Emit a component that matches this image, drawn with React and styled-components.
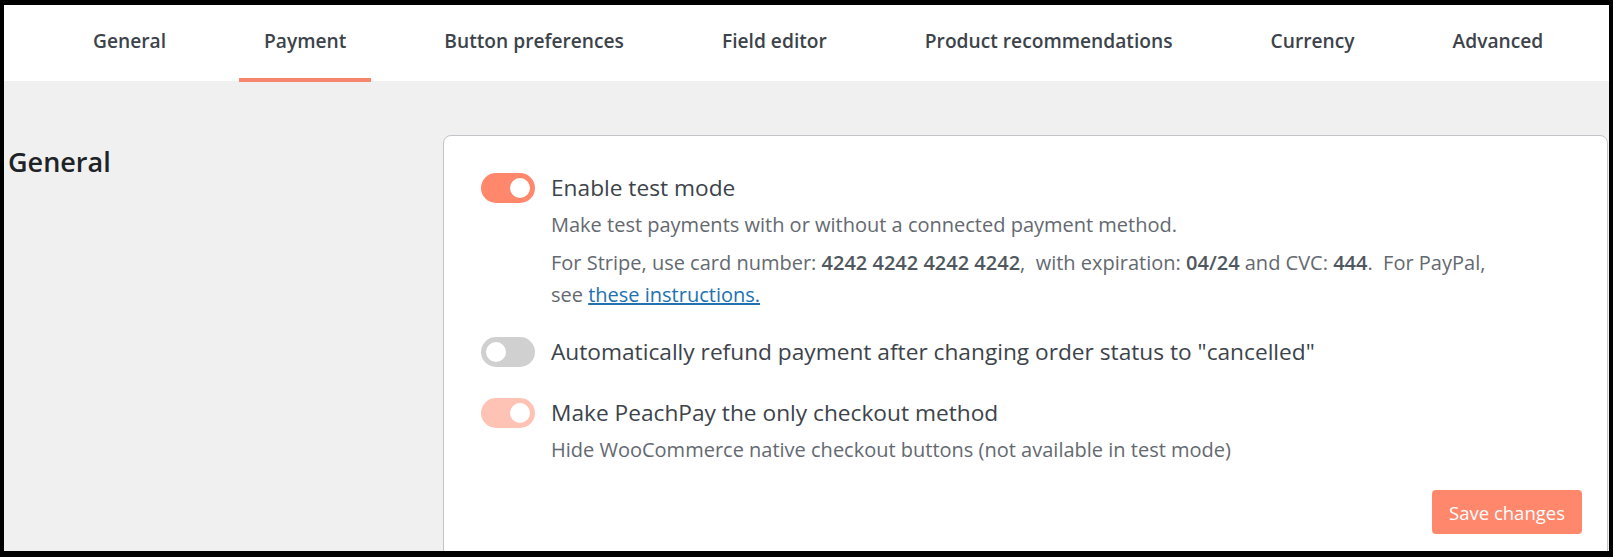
import React from 'react';
import styled, { createGlobalStyle } from 'styled-components';

const GlobalStyle = createGlobalStyle`
  html, body {
    margin: 0;
    padding: 0;
    background: #000;
  }
  * {
    box-sizing: border-box;
  }
`;

const Frame = styled.div`
  height: 100vh;
  border-style: solid;
  border-color: #000;
  border-width: 5px 4px 6px 4px;
  background: #f0f0f1;
  display: flex;
  flex-direction: column;
  overflow: hidden;
  font-family: "Open Sans", "Noto Sans", sans-serif;
`;

const TabBar = styled.nav`
  height: 76px;
  flex-shrink: 0;
  background: #fff;
  display: flex;
  align-items: stretch;
  gap: 48px;
  padding-left: 64px;
`;

const Tab = styled.a`
  display: flex;
  align-items: center;
  padding: 0 25px 3px;
  font-size: 19.2px;
  font-weight: 600;
  color: #3c434a;
  text-decoration: none;
  white-space: nowrap;
  border-bottom: 4px solid ${props => (props.active ? '#f6866d' : 'transparent')};
  margin-bottom: -1px;
`;

const Main = styled.div`
  flex: 1;
  min-height: 0;
  display: grid;
  grid-template-columns: 439px 1fr;
  padding-top: 54px;
  padding-right: 1px;
  overflow: hidden;
`;

const SectionTitle = styled.h2`
  margin: 11px 0 0 4px;
  font-size: 27px;
  font-weight: 600;
  color: #1d2327;
  line-height: 1.2;
`;

const Card = styled.section`
  background: #fff;
  border: 1px solid #c3c4c7;
  border-radius: 8px;
  padding: 34px 25px 60px 37px;
  display: flex;
  flex-direction: column;
  gap: 24px;
  min-height: 460px;
`;

const Setting = styled.div`
  display: grid;
  grid-template-columns: 54px 1fr;
  column-gap: 16px;
  align-items: center;
  margin-top: ${props => props.shift || 0}px;
`;

const Toggle = styled.span`
  position: relative;
  width: 54px;
  height: 30px;
  border-radius: 15px;
  background: ${props => props.color};

  &::after {
    content: '';
    position: absolute;
    top: 5px;
    ${props => (props.on ? 'right: 5px;' : 'left: 5px;')}
    width: 20px;
    height: 20px;
    border-radius: 50%;
    background: #fff;
  }
`;

const Label = styled.span`
  font-size: 22.7px;
  color: #3c434a;
  line-height: 36px;
  white-space: nowrap;
`;

const Details = styled.div`
  grid-column: 2;
  padding-top: 3px;
`;

const Description = styled.p`
  margin: 0 0 6px;
  font-size: 20px;
  line-height: 32px;
  color: #646970;
  white-space: nowrap;

  &:last-child {
    margin-bottom: 0;
  }

  b {
    font-weight: 600;
    color: #50575e;
  }

  a {
    color: #2271b1;
  }
`;

const Footer = styled.div`
  display: flex;
  justify-content: flex-end;
`;

const SaveButton = styled.button`
  height: 44px;
  padding: 0 17px;
  border: none;
  border-radius: 4px;
  background: #ff876c;
  color: #fff;
  font-family: inherit;
  font-size: 18.5px;
  cursor: pointer;
`;

const tabs = [
  'General',
  'Payment',
  'Button preferences',
  'Field editor',
  'Product recommendations',
  'Currency',
  'Advanced',
];

export default function App() {
  return (
    <>
      <GlobalStyle />
      <Frame>
        <TabBar>
          {tabs.map(name => (
            <Tab key={name} href="#" active={name === 'Payment'}>
              {name}
            </Tab>
          ))}
        </TabBar>
        <Main>
          <SectionTitle>General</SectionTitle>
          <Card>
            <Setting>
              <Toggle on color="#ff876c" />
              <Label>Enable test mode</Label>
              <Details>
                <Description>Make test payments with or without a connected payment method.</Description>
                <Description>
                  For Stripe, use card number: <b>4242 4242 4242 4242</b>,&nbsp; with expiration: <b>04/24</b> and
                  CVC: <b>444</b>.&nbsp; For PayPal,
                  <br />
                  see <a href="#">these instructions.</a>
                </Description>
              </Details>
            </Setting>
            <Setting shift={-1}>
              <Toggle color="#d0d0d0" />
              <Label>Automatically refund payment after changing order status to "cancelled"</Label>
            </Setting>
            <Setting shift={1}>
              <Toggle on color="#ffc3b5" />
              <Label>Make PeachPay the only checkout method</Label>
              <Details>
                <Description>Hide WooCommerce native checkout buttons (not available in test mode)</Description>
              </Details>
            </Setting>
            <Footer>
              <SaveButton>Save changes</SaveButton>
            </Footer>
          </Card>
        </Main>
      </Frame>
    </>
  );
}
